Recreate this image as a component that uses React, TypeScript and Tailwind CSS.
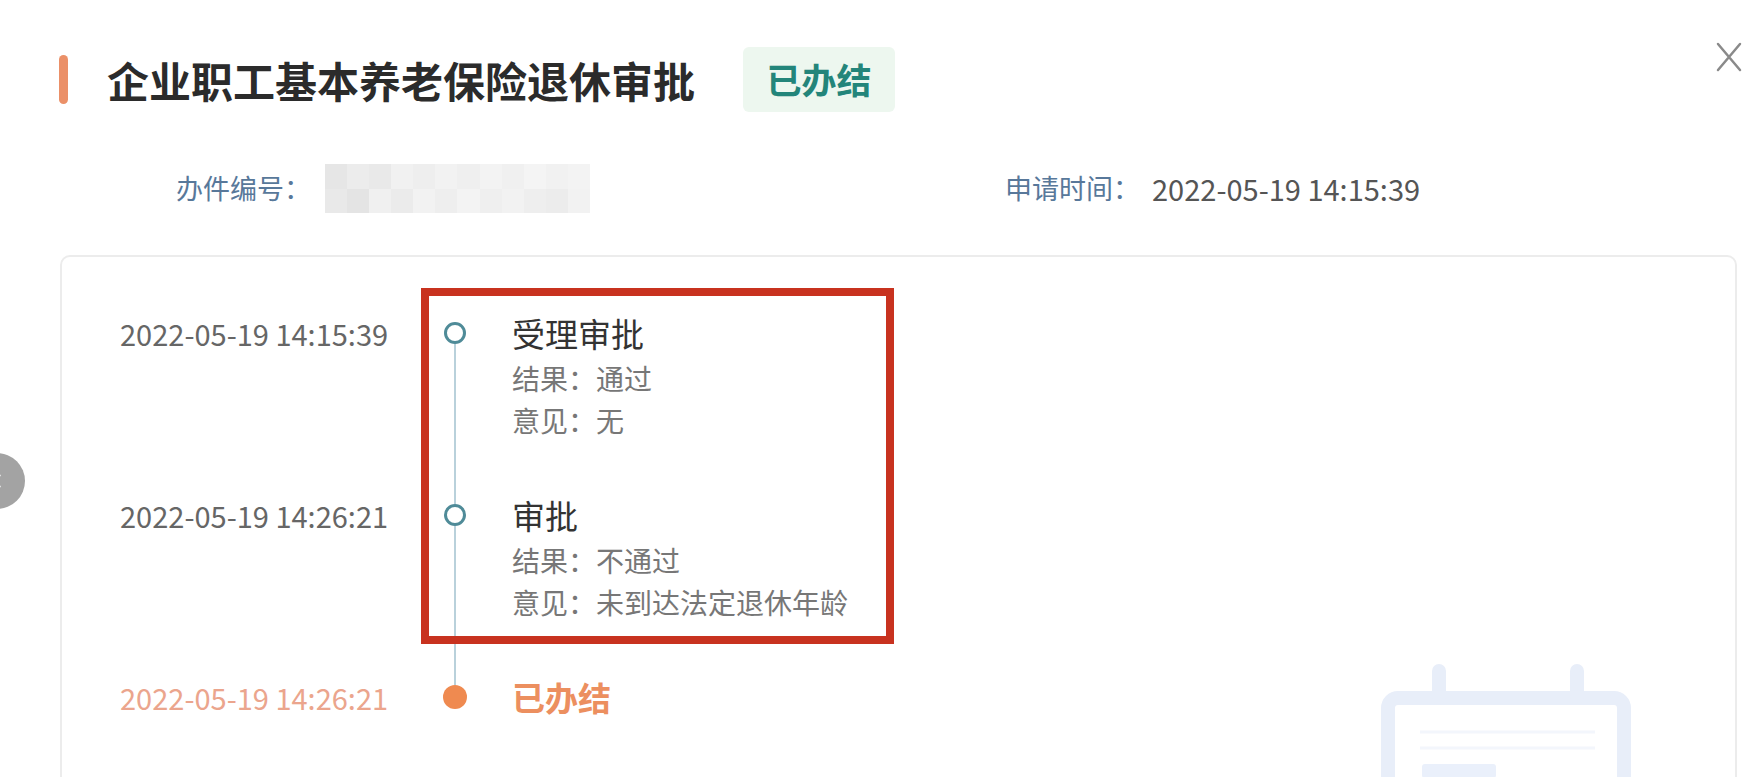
import { ChevronLeft } from "lucide-react";

const steps = [
  { time: "2022-05-19 14:15:39", title: "受理审批", result: "通过", opinion: "无" },
  { time: "2022-05-19 14:26:21", title: "审批", result: "不通过", opinion: "未到达法定退休年龄" },
];

// blurred case number
const mosaic = [
  ["bg-[#e6e6e6]", "bg-[#ececec]", "bg-[#e9e9e9]", "bg-[#f1f1f1]", "bg-[#eeeeee]", "bg-[#f2f2f2]", "bg-[#efefef]", "bg-[#f3f3f3]", "bg-[#f0f0f0]", "bg-[#f4f4f4]", "bg-[#f1f1f1]", "bg-[#f3f3f3]"],
  ["bg-[#e9e9e9]", "bg-[#e4e4e4]", "bg-[#f0f0f0]", "bg-[#ebebeb]", "bg-[#f2f2f2]", "bg-[#eeeeee]", "bg-[#f3f3f3]", "bg-[#efefef]", "bg-[#f2f2f2]", "bg-[#eeeeee]", "bg-[#ececec]", "bg-[#f2f2f2]"],
];

export default function App() {
  return (
    <div className="relative h-[777px] w-[1742px] overflow-hidden bg-white font-['Noto_Sans_CJK_SC',sans-serif]">
      <div className="ml-[59px] mt-[47px] flex h-[65px] items-center">
        <div className="h-[49px] w-[9px] rounded-full bg-[#eb9068]" />
        <h1 className="ml-[39px] text-[42px] font-bold leading-none text-[#2b2b2b]">企业职工基本养老保险退休审批</h1>
        <div className="ml-[48px] flex h-[65px] w-[152px] items-center justify-center rounded-md bg-[#edf7ef] text-[35px] font-bold text-[#23857a]">
          已办结
        </div>
      </div>

      <div className="mt-[52px] flex h-[49px] items-center pl-[176px] text-[27px]">
        <div className="flex w-[829px] items-center">
          <span className="text-[#58789a]">办件编号：</span>
          <div className="ml-[14px] flex h-[49px] w-[265px] flex-col">
            {mosaic.map((row, i) => (
              <div key={i} className="flex flex-1">
                {row.map((c, j) => (
                  <div key={j} className={`flex-1 ${c}`} />
                ))}
              </div>
            ))}
          </div>
        </div>
        <span className="text-[#58789a]">申请时间：</span>
        <span className="ml-[12px] text-[29px] text-[#555]">2022-05-19 14:15:39</span>
      </div>

      <div className="relative ml-[60px] mr-[5px] mt-[42px] h-[600px] rounded-[10px] border-2 border-[#ececec] pl-[58px] pt-[60px]">
        {steps.map((s, i) => (
          <div key={s.title} className="flex h-[182px]">
            <div className="w-[322px] text-[29px] leading-[32px] text-[#666]">{s.time}</div>
            <div className="flex w-[26px] flex-col items-center">
              <div className={i === 0 ? "h-[5px] w-[2px]" : "h-[5px] w-[2px] bg-[#b9d1db]"} />
              <div className="h-[22px] w-[22px] rounded-full border-[3px] border-[#4f8b98] bg-white" />
              <div className="w-[2px] flex-1 bg-[#b9d1db]" />
            </div>
            <div className="ml-[44px]">
              <div className="text-[33px] leading-[32px] text-[#333]">{s.title}</div>
              <div className="mt-[8px] text-[28px] leading-[42px] text-[#777]">结果：{s.result}</div>
              <div className="text-[28px] leading-[42px] text-[#777]">意见：{s.opinion}</div>
            </div>
          </div>
        ))}
        <div className="flex">
          <div className="w-[322px] text-[29px] leading-[32px] text-[#eba58d]">2022-05-19 14:26:21</div>
          <div className="flex w-[26px] flex-col items-center">
            <div className="h-[4px] w-[2px] bg-[#b9d1db]" />
            <div className="h-[24px] w-[24px] rounded-full bg-[#ef8a50]" />
          </div>
          <div className="ml-[44px] text-[33px] font-bold leading-[32px] text-[#ec8f5f]">已办结</div>
        </div>

        <div className="absolute left-[359px] top-[31px] h-[356px] w-[473px] border-[8px] border-[#c8321f]" />

        <svg className="absolute left-[1318px] top-[403px]" width="260" height="130" viewBox="0 0 260 130" fill="none">
          <rect x="8" y="38" width="236" height="110" rx="10" stroke="#e8eef9" strokeWidth="14" />
          <rect x="52" y="4" width="14" height="40" rx="7" fill="#e8eef9" />
          <rect x="190" y="4" width="14" height="40" rx="7" fill="#e8eef9" />
          <line x1="40" y1="72" x2="215" y2="72" stroke="#f3f6fc" strokeWidth="3" />
          <line x1="40" y1="88" x2="215" y2="88" stroke="#f3f6fc" strokeWidth="3" />
          <rect x="42" y="104" width="74" height="14" rx="3" fill="#eaf0fb" />
        </svg>
      </div>

      <div className="absolute left-[-31px] top-[453px] flex h-[56px] w-[56px] items-center justify-center rounded-full bg-[#a3a3a3]">
        <ChevronLeft size={22} color="#ffffff" strokeWidth={2} />
      </div>

      <svg className="absolute left-[1716px] top-[42px]" width="26" height="30" viewBox="0 0 26 30">
        <path d="M2 2 L24 28 M24 2 L2 28" stroke="#8a8a8a" strokeWidth="2.5" strokeLinecap="round" />
      </svg>
    </div>
  );
}
